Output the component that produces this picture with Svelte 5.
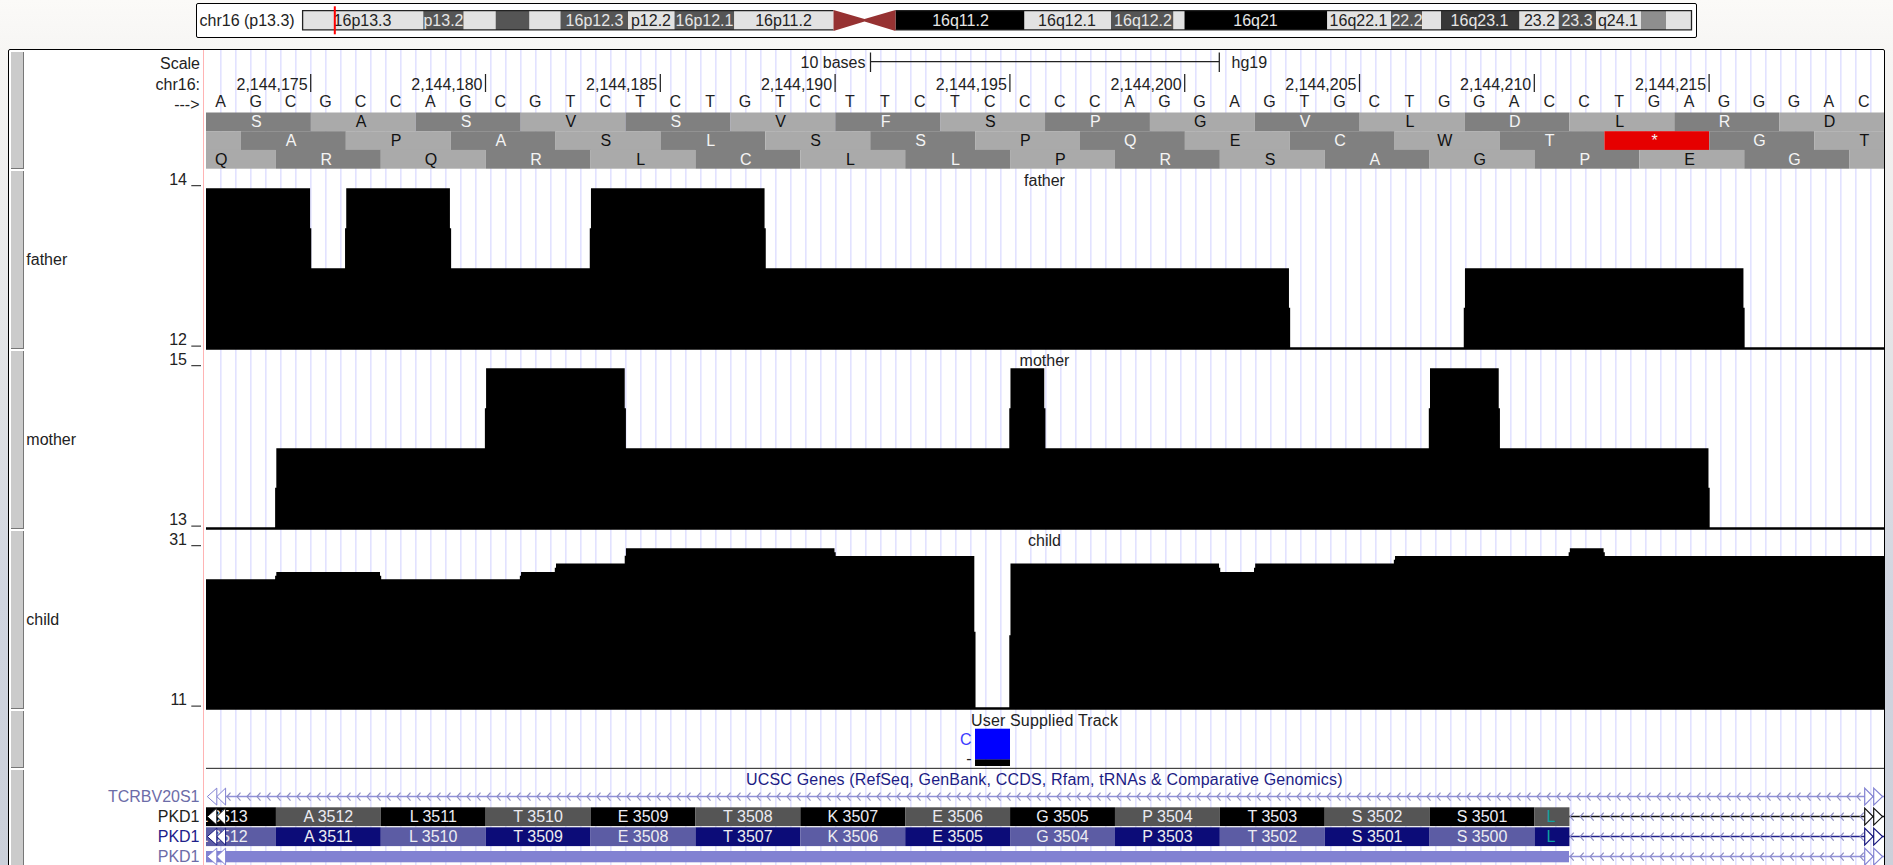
<script>
  const X0 = 206;
  const BASE = 34.96;
  const bx = (i) => X0 + Math.max(0, Math.min(48, i)) * BASE;

  const light = '#e2e2e2';
  const bands = [
    [302, 423.3, light, '16p13.3', '#222', 362.5],
    [423.3, 463.7, '#555', 'p13.2', '#e6e6e6', 443.5],
    [463.7, 495.7, light],
    [495.7, 529.5, '#555'],
    [529.5, 560.5, light],
    [560.5, 628.2, '#555', '16p12.3', '#e6e6e6', 594.5],
    [628.2, 674.5, light, 'p12.2', '#222', 651],
    [674.5, 734.3, '#555', '16p12.1', '#e6e6e6', 704.5],
    [734.3, 833.5, light, '16p11.2', '#222', 783.5],
    [895.5, 1024.5, '#000', '16q11.2', '#e6e6e6', 960.5],
    [1024.5, 1111, light, '16q12.1', '#222', 1067],
    [1111, 1173.5, '#555', '16q12.2', '#e6e6e6', 1143],
    [1173.5, 1184.5, light],
    [1184.5, 1327.3, '#000', '16q21', '#e6e6e6', 1255.5],
    [1327.3, 1391, light, '16q22.1', '#222', 1358.5],
    [1391, 1422, '#555', '22.2', '#e6e6e6', 1407],
    [1422, 1441, light],
    [1441, 1519.5, '#383838', '16q23.1', '#e6e6e6', 1479.5],
    [1519.5, 1558.7, light, '23.2', '#222', 1539.5],
    [1558.7, 1596, '#505050', '23.3', '#e6e6e6', 1577],
    [1596, 1641, light, 'q24.1', '#222', 1618],
    [1641, 1666, '#8e8e8e'],
    [1666, 1692, light]
  ];

  const sequence = 'AGCGCCAGCGTCTCTGTCTTCTCCCCAGGAGTGCTGGACCTGAGGGAC'.split('');
  const ticks = [3, 8, 13, 18, 23, 28, 33, 38, 43].map((b) => ({
    x: bx(b) - 0.2,
    label: '2,144,' + (172 + b)
  }));

  const frames = [
    { start: 0, dark: 0, aa: 'SASVSVFSPGVLDLRD' },
    { start: -2, dark: 1, aa: ' APASLSSPQECWT*GT' },
    { start: -1, dark: 1, aa: 'QRQRLCLLPRSAGPEG ' }
  ].map((f, row) =>
    f.aa.split('').map((a, i) => {
      const s = f.start + i * 3;
      const dark = i % 2 === f.dark;
      return {
        a,
        x: bx(s),
        w: bx(s + 3) - bx(s),
        cx: X0 + (s + 1.5) * BASE - 2.2,
        y: 62.5 + row * 18.7,
        fill: a === '*' ? '#e60000' : dark ? '#808080' : '#aaaaaa',
        text: dark || a === '*' ? '#f4f4f4' : '#111'
      };
    })
  );

  const full = 18.3, half = 98.3, zero = 177.3;
  const wiggles = [
    { name: 'father', hi: 14, lo: 12, runs: [[0, 3, full], [3, 4, half], [4, 7, full], [7, 11, half], [11, 16, full], [16, 31, half], [31, 36, zero], [36, 44, half], [44, 48, zero]] },
    { name: 'mother', hi: 15, lo: 13, runs: [[0, 2, zero], [2, 8, half], [8, 12, full], [12, 23, half], [23, 24, full], [24, 35, half], [35, 37, full], [37, 43, half], [43, 48, zero]] },
    { name: 'child', hi: 31, lo: 11, runs: [[0, 2, 49.3], [2, 5, 42], [5, 9, 49.3], [9, 10, 42], [10, 12, 33.4], [12, 18, 18.3], [18, 22, 26], [22, 23, zero], [23, 29, 33.4], [29, 30, 42], [30, 34, 33.4], [34, 39, 26], [39, 40, 18.3], [40, 48, 26]] }
  ];

  // Each change of level is drawn as two short risers, offset by one pixel at mid height.
  function outline(runs) {
    let d = `M${X0} 179.7V${runs[0][2]}`;
    for (let i = 1; i < runs.length; i++) {
      const from = runs[i - 1][2];
      const to = runs[i][2];
      const x = bx(runs[i][0]);
      d += `H${x - 0.8}V${(from + to) / 2}H${x + 0.4}V${to}`;
    }
    return d + 'H1884V179.7Z';
  }

  const codons = ['L 3513', 'A 3512', 'L 3511', 'T 3510', 'E 3509', 'T 3508', 'K 3507', 'E 3506', 'G 3505', 'P 3504', 'T 3503', 'S 3502', 'S 3501'];
  const genes = [
    { y: 38, odd: '#555555', even: '#000000', shift: 0 },
    { y: 58, odd: '#0c0c78', even: '#5c5ca4', shift: 1 }
  ].map((g) => ({
    ...g,
    cells: codons.map((c, i) => ({
      x: bx(i * 3 - 1),
      w: bx(i * 3 + 2) - bx(i * 3 - 1),
      cx: X0 + (i * 3 + 0.5) * BASE,
      fill: i % 2 ? g.odd : g.even,
      label: c.slice(0, 2) + (Number(c.slice(2)) - g.shift)
    }))
  }));

  function chevrons(x, end, y) {
    let d = '';
    for (; x < end; x += 10) d += `M${x + 4} ${y - 4}L${x + 0.5} ${y}L${x + 4} ${y + 4}`;
    return d;
  }
  const introns = [
    { y: 27.6, x: 226.5, line: '#9090d8', edge: '#8282d2', start: 226 },
    { y: 47.6, x: 1569.7, line: '#111', edge: '#111', start: 1569 },
    { y: 67.6, x: 1569.7, line: '#20208a', edge: '#14147c', start: 1569 },
    { y: 87.6, x: 1569.7, line: '#9090d8', edge: '#8282d2', start: 1569 }
  ];
</script>

<div class="page">
  <div class="ideogram">
    <svg width="1499" height="33" viewBox="197 4 1499 33">
      <text x="199.5" y="26.3" fill="#222">chr16 (p13.3)</text>
      {#each bands as [a, b, fill, label, ink, cx]}
        <rect x={a} y="10.5" width={b - a} height="19.5" {fill} />
        {#if label}<text x={cx} y="26.3" text-anchor="middle" fill={ink}>{label}</text>{/if}
      {/each}
      <path d="M833.5 10.6H302.6V29.9H833.5M895.5 10.6H1691.5V29.9H895.5" fill="none" stroke="#222" stroke-width="1.3" />
      <path d="M833.5 10L864.5 19L895.5 10V31L864.5 21.5L833.5 31Z" fill="#963232" />
      <rect x="333.8" y="6.3" width="2" height="28" fill="#f00" />
    </svg>
  </div>

  <div class="tracks">
    <section class="track ruler">
      <div class="handle"></div>
      <svg width="1860" height="120" viewBox="24 0 1860 120">
        <g fill="#222">
          <text x="200" y="18.6" text-anchor="end">Scale</text>
          <text x="200" y="39.8" text-anchor="end">chr16:</text>
          <text x="199.5" y="59.5" text-anchor="end">---&gt;</text>
          <text x="865.5" y="17.7" text-anchor="end">10 bases</text>
          <text x="1231.5" y="17.7">hg19</text>
          {#each ticks as t}
            <text x={t.x - 3} y="40.2" text-anchor="end">{t.label}</text>
            <rect x={t.x - 0.6} y="24" width="1.25" height="18" />
          {/each}
          <path d="M870.5 2.5V22M870.5 11.7H1219.3M1219.3 2.5V22" stroke="#222" stroke-width="1.25" />
          {#each sequence as c, i}
            <text x={bx(i + 0.5) - 2.8} y="57" text-anchor="middle">{c}</text>
          {/each}
        </g>
        {#each frames as frame}
          {#each frame as f}
            <rect x={f.x} y={f.y} width={f.w} height="18.8" fill={f.fill} />
            {#if f.a !== ' '}<text x={f.cx} y={f.y + 14.7} text-anchor="middle" fill={f.text}>{f.a}</text>{/if}
          {/each}
        {/each}
      </svg>
    </section>

    {#each wiggles as w}
      <section class="track wiggle">
        <div class="handle"></div>
        <svg width="1860" height="180" viewBox="24 0 1860 180">
          <g fill="#222">
            <text x="26.3" y="94.5">{w.name}</text>
            <text x="187" y="14.8" text-anchor="end">{w.hi}</text>
            <text x="187" y="175" text-anchor="end">{w.lo}</text>
            <path d="M191.3 15.7H201M191.3 176.2H201" stroke="#444" stroke-width="1.2" />
            <text x="1044.5" y="16" text-anchor="middle">{w.name}</text>
          </g>
          <path d={outline(w.runs)} fill="#000" />
        </svg>
      </section>
    {/each}

    <section class="track custom">
      <div class="handle"></div>
      <svg width="1860" height="59" viewBox="24 0 1860 59">
        <text x="971" y="15.8" fill="#222" textLength="147">User Supplied Track</text>
        <text x="971.5" y="34.6" text-anchor="end" fill="#3c3cff">C</text>
        <text x="971.5" y="53.8" text-anchor="end" fill="#222">-</text>
        <rect x="975" y="18.7" width="35" height="31" fill="#00f" />
        <rect x="975" y="49.5" width="35" height="6.5" />
        <rect x="206" y="57.8" width="1678" height="1.2" fill="#444" />
      </svg>
    </section>

    <section class="track genes">
      <div class="handle"></div>
      <svg width="1860" height="96" viewBox="24 0 1860 96">
        <text x="746" y="16" fill="#1c1c84" textLength="596.5">UCSC Genes (RefSeq, GenBank, CCDS, Rfam, tRNAs &amp; Comparative Genomics)</text>
        <g text-anchor="end">
          <text x="199.5" y="33.4" fill="#6c6ca8">TCRBV20S1</text>
          <text x="199.5" y="53.4" fill="#222">PKD1</text>
          <text x="199.5" y="73.4" fill="#20208a">PKD1</text>
          <text x="199.5" y="93.4" fill="#6c6ca8">PKD1</text>
        </g>
        {#each introns as n}
          <path d="M{n.start} {n.y}H1884" stroke={n.line} stroke-width="1.5" />
          <path d={chevrons(n.x, 1862, n.y)} fill="none" stroke="#8c8cc4" stroke-width="1.2" />
          <path d="M1864.7 {n.y - 8.5}L1873 {n.y}L1864.7 {n.y + 8.5}ZM1873.7 {n.y - 8.5}L1882.5 {n.y}L1873.7 {n.y + 8.5}Z" fill="#fff" stroke={n.edge} stroke-width="1.2" />
        {/each}
        <svg x="206" y="0" width="1678" height="96" viewBox="206 0 1678 96">
          {#each genes as g}
            {#each g.cells as c}
              <rect x={c.x} y={g.y + 0.3} width={c.w} height="18.8" fill={c.fill} />
              <text x={c.cx} y={g.y + 15.4} text-anchor="middle" fill="#ececf2">{c.label}</text>
            {/each}
            <rect x={bx(38)} y={g.y + 0.3} width={BASE} height="18.8" fill={g.odd} />
            <text x={bx(38.5) - 1} y={g.y + 15.4} text-anchor="middle" fill="#10a0a0">L</text>
          {/each}
          <rect x="206" y="82" width="1363" height="11.3" fill="#8282d2" />
          {#each introns as n}
            <path d="M216.8 {n.y - 8.5}L207.3 {n.y}L216.8 {n.y + 8.5}ZM225.6 {n.y - 8.5}L216.8 {n.y}L225.6 {n.y + 8.5}Z" fill="#fff" stroke={n.edge} stroke-width="1" />
          {/each}
        </svg>
      </svg>
    </section>
  </div>
</div>

<style>
  :global(body) {
    margin: 0;
    overflow: hidden;
  }
  .page {
    box-sizing: border-box;
    width: 1893px;
    height: 865px;
    overflow: hidden;
    padding: 3px 8px 0;
    background: linear-gradient(#fbfaf8 0, #f6f5f3 60px, #ececec 220px, #dfe1e4 400px, #d0d5e0 600px, #cbd0da 865px);
  }
  .ideogram {
    box-sizing: border-box;
    width: 1501px;
    height: 35px;
    margin-left: 188px;
    border: 1px solid #000;
    border-radius: 2px;
    background: #fff;
  }
  .tracks {
    box-sizing: border-box;
    width: 1877px;
    height: 830px;
    margin-top: 11px;
    border: 1px solid #000;
    border-radius: 2px;
    background:
      linear-gradient(#ffb4b4, #ffb4b4) 194px 0 / 1px 100% no-repeat,
      repeating-linear-gradient(90deg, #e2e2ff 0, #e2e2ff 1px, #ededff 1px, #ededff 2px, transparent 2px, transparent 15px) 211px 0 / 1665px 100% no-repeat,
      #fff;
  }
  .track {
    display: flex;
    padding-left: 2px;
  }
  .ruler { height: 120px; }
  .wiggle { height: 180px; }
  .custom { height: 59px; }
  .genes { height: 110px; }
  .handle {
    box-sizing: border-box;
    width: 13px;
    margin: 1px 0;
    flex: none;
    background: #cbcbcb;
    border-right: 1px solid #777;
    border-bottom: 1px solid #777;
  }
  .ruler .handle { margin-top: 2px; }
  svg {
    display: block;
    flex: none;
  }
  text {
    font-family: "Liberation Sans", Arial, sans-serif;
    font-size: 16px;
    white-space: pre;
  }
</style>
